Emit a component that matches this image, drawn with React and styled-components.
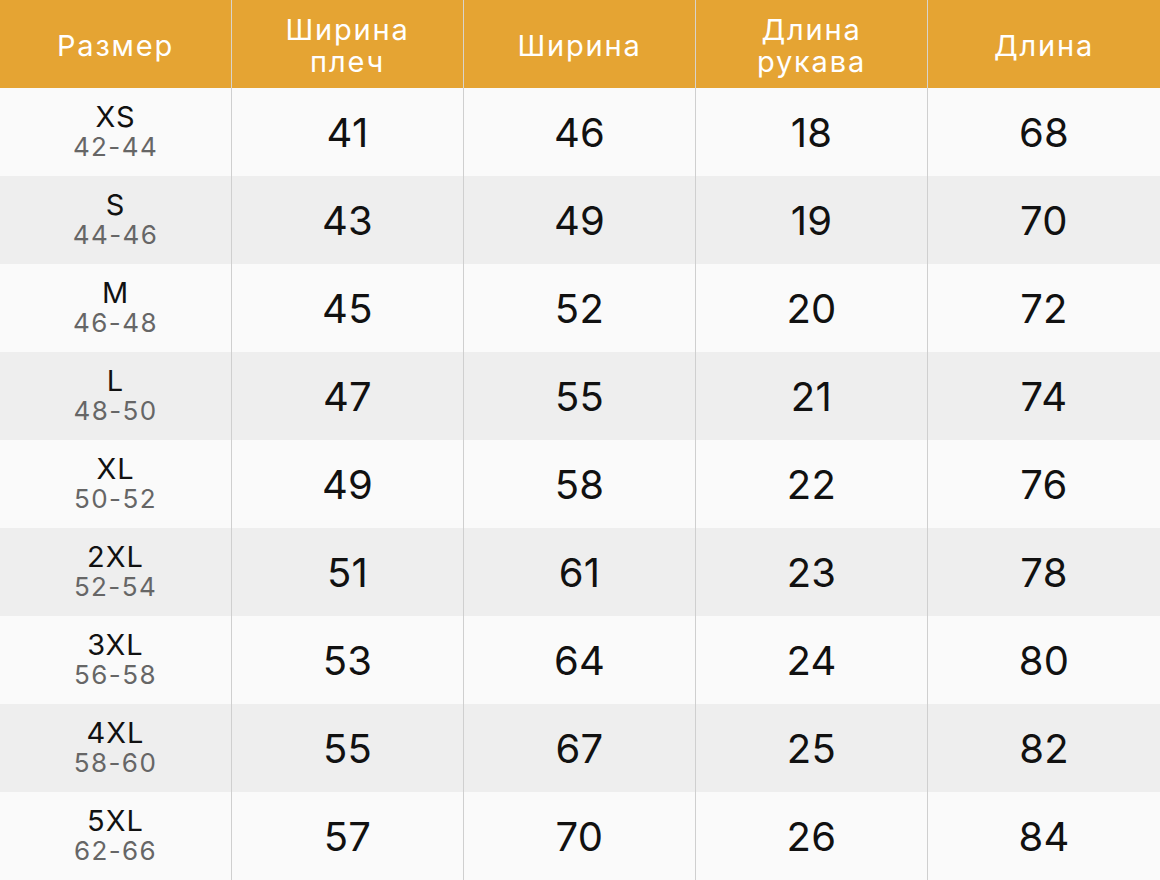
import styled, { createGlobalStyle } from "styled-components";

const GlobalStyle = createGlobalStyle`
  html, body {
    margin: 0;
    padding: 0;
    background: #fafafa;
  }
  body {
    font-family: Inter, "Noto Sans", Roboto, sans-serif;
  }
`;

const rows = [
  { size: "XS", ru: "42-44", vals: [41, 46, 18, 68] },
  { size: "S", ru: "44-46", vals: [43, 49, 19, 70] },
  { size: "M", ru: "46-48", vals: [45, 52, 20, 72] },
  { size: "L", ru: "48-50", vals: [47, 55, 21, 74] },
  { size: "XL", ru: "50-52", vals: [49, 58, 22, 76] },
  { size: "2XL", ru: "52-54", vals: [51, 61, 23, 78] },
  { size: "3XL", ru: "56-58", vals: [53, 64, 24, 80] },
  { size: "4XL", ru: "58-60", vals: [55, 67, 25, 82] },
  { size: "5XL", ru: "62-66", vals: [57, 70, 26, 84] },
];

const headers = ["Размер", ["Ширина", "плеч"], "Ширина", ["Длина", "рукава"], "Длина"];

const Table = styled.div`
  width: 1160px;
  display: grid;
  grid-template-columns: repeat(5, 1fr);
  grid-auto-rows: 88px;
`;

const Cell = styled.div`
  display: flex;
  flex-direction: column;
  align-items: center;
  justify-content: center;
  text-align: center;
  border-right: 1px solid #cfcfcf;
  &:nth-child(5n) {
    border-right: none;
  }
`;

const HeadCell = styled(Cell)`
  background: #e5a433;
  color: #ffffff;
  font-size: 29px;
  line-height: 32px;
  letter-spacing: 1.8px;
  border-right-color: #d8d4cc;
  padding-top: 3px;
`;

const BodyCell = styled(Cell)`
  background: ${(p) => (p.$alt ? "#eeeeee" : "#fafafa")};
  color: #111111;
  font-size: 40px;
  letter-spacing: 0.3px;
`;

const SizeName = styled.div`
  font-size: 29px;
  line-height: 30px;
  letter-spacing: 1px;
  color: #111111;
`;

const SizeRu = styled.div`
  font-size: 26px;
  line-height: 30px;
  letter-spacing: 1.4px;
  color: #666666;
`;

const App = () => {
  return (
    <>
      <GlobalStyle />
      <Table>
        {headers.map((h, i) => (
          <HeadCell key={i}>
            {Array.isArray(h) ? h.map((line) => <div key={line}>{line}</div>) : h}
          </HeadCell>
        ))}
        {rows.map((r, i) => [
          <BodyCell key={r.size} $alt={i % 2 === 1}>
            <SizeName>{r.size}</SizeName>
            <SizeRu>{r.ru}</SizeRu>
          </BodyCell>,
          ...r.vals.map((v, j) => (
            <BodyCell key={r.size + j} $alt={i % 2 === 1}>
              {v}
            </BodyCell>
          )),
        ])}
      </Table>
    </>
  );
};

export default App;
